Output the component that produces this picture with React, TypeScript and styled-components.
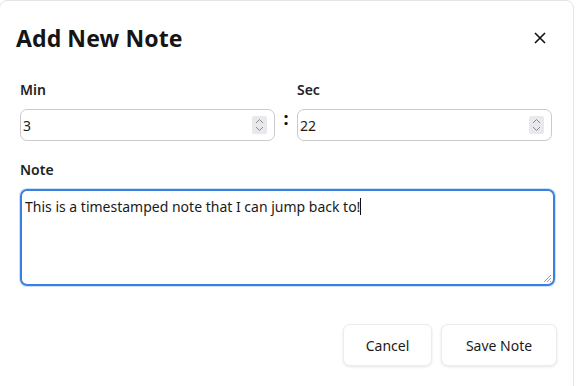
import React from "react";
import styled, { createGlobalStyle } from "styled-components";

const GlobalStyle = createGlobalStyle`
  html, body {
    margin: 0;
    padding: 0;
    background: #ffffff;
    overflow: hidden;
  }
  body {
    font-family: "Noto Sans", "Open Sans", sans-serif;
    color: #1a1a1a;
  }
`;

const Dialog = styled.div`
  box-sizing: border-box;
  width: 575px;
  height: 420px;
  margin-left: -1px;
  border: 1px solid #e4e4e4;
  border-radius: 8px;
  background: #fff;
  padding: 17px 20px 0 16px;
`;

const Header = styled.div`
  display: flex;
  align-items: center;
  justify-content: space-between;
  height: 40px;
`;

const Title = styled.h2`
  margin: 0;
  font-size: 23px;
  font-weight: 700;
  color: #151515;
  letter-spacing: 0.1px;
`;

const CloseButton = styled.button`
  display: flex;
  align-items: center;
  justify-content: center;
  width: 24px;
  height: 24px;
  padding: 0;
  margin-right: 1px;
  border: none;
  background: transparent;
  color: #111;
  cursor: pointer;
`;

const Body = styled.div`
  padding: 22px 1px 0 4px;
`;

const TimeRow = styled.div`
  display: flex;
  align-items: flex-end;
`;

const Field = styled.div<{ $w: number }>`
  display: flex;
  flex-direction: column;
  width: ${(p) => p.$w}px;
`;

const Label = styled.label`
  font-size: 14px;
  font-weight: 600;
  color: #222;
  line-height: 20px;
  margin-bottom: 9px;
`;

const Colon = styled.span`
  width: 22px;
  text-align: center;
  font-size: 18px;
  font-weight: 700;
  line-height: 18px;
  margin-bottom: 14px;
  color: #111;
`;

const NumberBox = styled.div`
  box-sizing: border-box;
  display: flex;
  align-items: center;
  height: 32px;
  border: 1px solid #cacaca;
  border-radius: 7px;
  padding: 0 7px 0 2px;
  background: #fff;
`;

const NumberValue = styled.span`
  flex: 1;
  font-size: 14px;
  color: #1a1a1a;
`;

const Spinner = styled.span`
  display: flex;
  align-items: center;
  justify-content: center;
  width: 15px;
  height: 18px;
  background: #e9e9ed;
  border-radius: 2px;
`;

const NoteField = styled.div`
  display: flex;
  flex-direction: column;
  margin-top: 19px;
`;

const NoteArea = styled.div`
  box-sizing: border-box;
  position: relative;
  height: 97px;
  width: 535px;
  border: 2px solid #3a80de;
  border-radius: 7px;
  padding: 6px 3px;
  font-size: 14px;
  line-height: 20px;
  color: #1a1a1a;
  box-shadow: 0 0 0 1px rgba(58, 128, 222, 0.25);
`;

const Caret = styled.span`
  display: inline-block;
  width: 1px;
  height: 17px;
  background: #111;
  vertical-align: -3px;
`;

const ResizeGrip = styled.svg`
  position: absolute;
  right: 1px;
  bottom: 1px;
`;

const Footer = styled.div`
  display: flex;
  justify-content: flex-end;
  gap: 9px;
  padding-top: 38px;
  margin-right: -5px;
`;

const Button = styled.button<{ $w: number }>`
  box-sizing: border-box;
  width: ${(p) => p.$w}px;
  height: 42px;
  border: 1px solid #ececec;
  border-radius: 7px;
  background: #fff;
  font-family: "Noto Sans", "Open Sans", sans-serif;
  font-size: 14px;
  color: #1a1a1a;
  box-shadow: 0 1px 3px rgba(0, 0, 0, 0.1);
  cursor: pointer;
`;

const SpinIcon = () => (
  <svg width="9" height="14" viewBox="0 0 9 14" fill="none" stroke="#8a8a8a" strokeWidth="1">
    <path d="M1 5 L4.5 1.5 L8 5" />
    <path d="M1 9 L4.5 12.5 L8 9" />
  </svg>
);

const NumberInput = ({ value }: { value: string }) => (
  <NumberBox>
    <NumberValue>{value}</NumberValue>
    <Spinner>
      <SpinIcon />
    </Spinner>
  </NumberBox>
);

export default function App() {
  return (
    <>
      <GlobalStyle />
      <Dialog>
        <Header>
          <Title>Add New Note</Title>
          <CloseButton aria-label="Close">
            <svg width="12" height="12" viewBox="0 0 12 12" stroke="#111" strokeWidth="1.6">
              <path d="M1 1 L11 11 M11 1 L1 11" />
            </svg>
          </CloseButton>
        </Header>
        <Body>
          <TimeRow>
            <Field $w={256}>
              <Label>Min</Label>
              <NumberInput value="3" />
            </Field>
            <Colon>:</Colon>
            <Field $w={256}>
              <Label>Sec</Label>
              <NumberInput value="22" />
            </Field>
          </TimeRow>
          <NoteField>
            <Label>Note</Label>
            <NoteArea>
              This is a timestamped note that I can jump back to!
              <Caret />
              <ResizeGrip width="10" height="10" viewBox="0 0 10 10" stroke="#999" strokeWidth="1">
                <path d="M9 2 L2 9 M9 5 L5 9 M9 8 L8 9" />
              </ResizeGrip>
            </NoteArea>
          </NoteField>
          <Footer>
            <Button $w={89}>Cancel</Button>
            <Button $w={116}>Save Note</Button>
          </Footer>
        </Body>
      </Dialog>
    </>
  );
}
